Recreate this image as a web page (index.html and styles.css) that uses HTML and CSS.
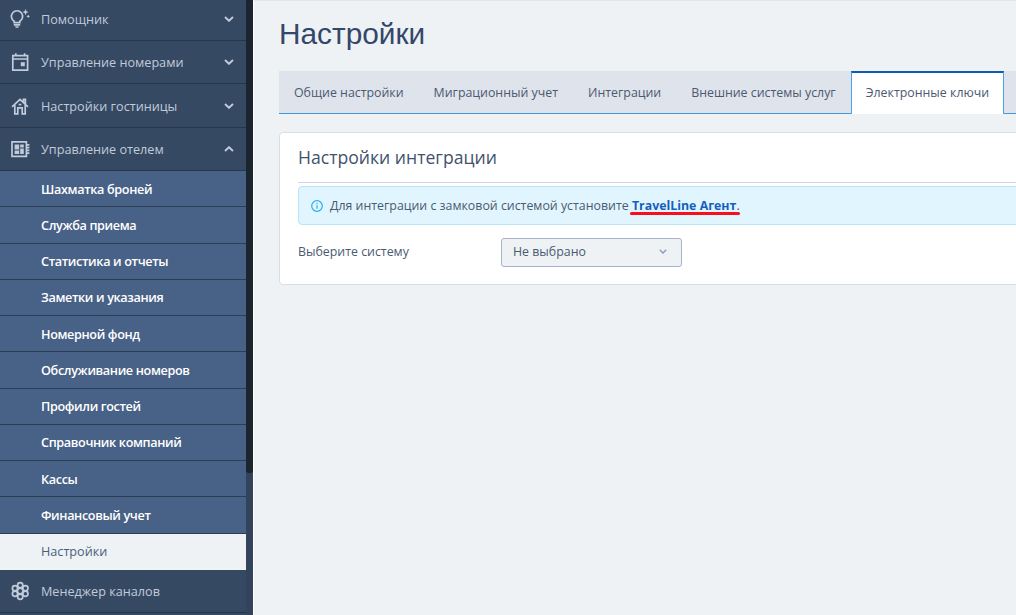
FILE: index.html
```html
<!DOCTYPE html>
<html lang="ru">
<head>
    <meta charset="UTF-8">
    <meta name="viewport" content="width=device-width, initial-scale=1.0">
    <title>Настройки</title>
    <link rel="stylesheet" href="styles.css">
</head>
<body>
    <aside class="sidebar">
        <nav class="menu">
            <a class="menu-item">
                <svg class="menu-icon" viewBox="0 0 20 20">
                    <path d="M4.2 12.2A5.6 5.6 0 1 1 9.8 12.2V13.6H4.2z"/>
                    <path d="M3.8 15.8h6.4M5.4 18h3.2"/>
                    <path class="fill" d="M15.5 0l.9 2.2 2.2.9-2.2.9-.9 2.2-.9-2.2-2.2-.9 2.2-.9zM18.2 5.4l.6 1.3 1.2.6-1.2.6-.6 1.3-.6-1.3-1.2-.6 1.2-.6z"/>
                </svg>
                <span>Помощник</span>
                <svg class="chevron" viewBox="0 0 10 6"><path d="M1 1l4 3.8L9 1"/></svg>
            </a>
            <a class="menu-item">
                <svg class="menu-icon" viewBox="0 0 20 20">
                    <path d="M2.8 3.6h14.8v14.6H2.8zM3 7h14.4M5.8 1.2v3M14.6 1.2v3"/>
                    <path class="fill" d="M10.8 10.2h4v4h-4z"/>
                </svg>
                <span>Управление номерами</span>
                <svg class="chevron" viewBox="0 0 10 6"><path d="M1 1l4 3.8L9 1"/></svg>
            </a>
            <a class="menu-item">
                <svg class="menu-icon" viewBox="0 0 20 20">
                    <path d="M2 10.8L10 3.4l8 7.4M4.8 9v8.8h3v-6h4.4v6h3V9M13.4 6V3.4h2V8"/>
                    <path d="M8.7 8.6h2.6"/>
                </svg>
                <span>Настройки гостиницы</span>
                <svg class="chevron" viewBox="0 0 10 6"><path d="M1 1l4 3.8L9 1"/></svg>
            </a>
            <a class="menu-item">
                <svg class="menu-icon" viewBox="0 0 20 20">
                    <path d="M2 2.8h14.4v14.6H2zM16.5 5.8H19.4M16.5 8.6H19.4M16.5 11.4H19.4M16.5 14.2H19.4"/>
                    <path class="fill" d="M4.6 5.4h4.6v5H4.6zM10.2 5.4h3.6v3h-3.6zM4.6 11.4h4.6V15H4.6zM10.2 9.4h3.6V15h-3.6z"/>
                </svg>
                <span>Управление отелем</span>
                <svg class="chevron" viewBox="0 0 10 6"><path d="M1 5l4-3.8L9 5"/></svg>
            </a>
            <div class="submenu">
                <a class="submenu-item">Шахматка броней</a>
                <a class="submenu-item">Служба приема</a>
                <a class="submenu-item">Статистика и отчеты</a>
                <a class="submenu-item">Заметки и указания</a>
                <a class="submenu-item">Номерной фонд</a>
                <a class="submenu-item">Обслуживание номеров</a>
                <a class="submenu-item">Профили гостей</a>
                <a class="submenu-item">Справочник компаний</a>
                <a class="submenu-item">Кассы</a>
                <a class="submenu-item">Финансовый учет</a>
                <a class="submenu-item active">Настройки</a>
            </div>
            <a class="menu-item">
                <svg class="menu-icon" viewBox="0 0 20 20">
                    <circle cx="10.2" cy="10" r="2.8"/>
                    <circle cx="10.2" cy="4.3" r="2.6"/>
                    <circle cx="10.2" cy="15.7" r="2.6"/>
                    <circle cx="5" cy="7.2" r="2.6"/>
                    <circle cx="15.4" cy="7.2" r="2.6"/>
                    <circle cx="5" cy="12.8" r="2.6"/>
                    <circle cx="15.4" cy="12.8" r="2.6"/>
                </svg>
                <span>Менеджер каналов</span>
            </a>
        </nav>
        <div class="scrollbar"><div class="scrollbar-thumb"></div></div>
    </aside>

    <main class="content">
        <h1>Настройки</h1>

        <div class="tabs">
            <a class="tab">Общие настройки</a>
            <a class="tab">Миграционный учет</a>
            <a class="tab">Интеграции</a>
            <a class="tab">Внешние системы услуг</a>
            <a class="tab active">Электронные ключи</a>
            <span class="tabs-rest"></span>
        </div>

        <section class="panel">
            <h2>Настройки интеграции</h2>
            <div class="notice">
                <svg class="info-icon" viewBox="0 0 12 12">
                    <circle cx="6" cy="6" r="5.3"/>
                    <path d="M6 5.2v3.6M6 3v1.2"/>
                </svg>
                <p>Для интеграции с замковой системой установите <span class="agent"><a>TravelLine Агент</a>.</span></p>
            </div>
            <div class="form-row">
                <label>Выберите систему</label>
                <div class="select">
                    <span>Не выбрано</span>
                    <svg class="select-arrow" viewBox="0 0 8 5"><path d="M.8.8L4 4 7.2.8"/></svg>
                </div>
            </div>
        </section>
    </main>
</body>
</html>
```
FILE: styles.css
```css
* {
    box-sizing: border-box;
}

body {
    margin: 0;
    height: 615px;
    display: flex;
    overflow: hidden;
    background-color: #eef2f5;
    color: #4a5a70;
    font-family: "Open Sans", sans-serif;
    font-size: 12.37px;
}

svg {
    fill: none;
    stroke: currentColor;
}

/* Sidebar */
.sidebar {
    display: flex;
    flex: none;
    width: 254px;
    height: 615px;
    overflow: hidden;
    background-color: #364962;
    border-right: 1px solid #fff;
    font-size: 12.65px;
}

.menu {
    width: 246px;
}

.menu-item {
    display: flex;
    align-items: center;
    height: 43.3px;
    padding: 0 12px 0 10px;
    border-bottom: 1px solid #28374b;
    color: #c0cbdb;
}

.menu-item:first-child {
    height: 41.2px;
    padding-bottom: 2px;
}

.menu-icon {
    width: 20px;
    height: 20px;
    margin-right: 11px;
    stroke-width: 1.7;
}

.fill {
    fill: currentColor;
    stroke: none;
}

.chevron {
    width: 10px;
    height: 6px;
    margin-left: auto;
    stroke-width: 1.9;
}

.submenu-item {
    display: flex;
    align-items: center;
    height: 36.25px;
    padding-left: 41px;
    border-bottom: 1px solid #2c3e56;
    background-color: #486186;
    color: #fff;
    font-weight: 600;
    letter-spacing: -0.36px;
}

.submenu-item.active {
    height: 36px;
    padding-bottom: 1px;
    border-bottom: none;
    background-color: #eef2f5;
    color: #4a5f7d;
    font-weight: 400;
    letter-spacing: 0;
}

.scrollbar {
    width: 7px;
    background-color: #34435c;
}

.scrollbar-thumb {
    height: 473px;
    background-color: #1a2530;
    border-radius: 0 0 3px 3px;
}

/* Content */
.content {
    flex: none;
    width: 800px;
    padding-left: 25px;
    border-top: 1px solid #e2e6ea;
}

h1 {
    height: 70px;
    margin: 0;
    padding-top: 15px;
    color: #34476a;
    font-family: "Liberation Sans", Arial, sans-serif;
    font-size: 29.8px;
    font-weight: 400;
    line-height: 36px;
}

.tabs {
    display: flex;
    height: 43px;
}

.tab {
    flex: none;
    height: 43px;
    padding: 0 15px;
    border-bottom: 1px solid #3f9be0;
    background-color: #dfe3eb;
    line-height: 43px;
}

.tab.active {
    padding: 0 14px;
    border: 1px solid #4ba3e6;
    border-top: 2px solid #0d5cb0;
    border-bottom: none;
    background-color: #fff;
    line-height: 39px;
}

.tabs-rest {
    flex: 1;
    background-color: #dfe3eb;
    border-bottom: 1px solid #3f9be0;
}

.panel {
    height: 153px;
    margin-top: 18px;
    padding: 0 0 0 18px;
    border: 1px solid #d8dee6;
    border-radius: 4px;
    background-color: #fff;
}

h2 {
    height: 50px;
    margin: 0 0 3px;
    border-bottom: 1px solid #d0d6e0;
    color: #42526b;
    font-size: 17.6px;
    font-weight: 400;
    line-height: 49px;
}

.notice {
    display: flex;
    align-items: center;
    height: 39px;
    padding-left: 12px;
    border: 1px solid #b5e6fb;
    border-radius: 4px;
    background-color: #e1f5fe;
}

.notice p {
    margin: 0 0 0 7px;
}

.info-icon {
    width: 12px;
    height: 12px;
    color: #29b0f0;
    stroke-width: 1.2;
}

.agent {
    position: relative;
}

.agent a {
    color: #1560bd;
    font-weight: 700;
}

/* red marker line under the link */
.agent::after {
    content: "";
    position: absolute;
    left: -2px;
    right: 0;
    bottom: -1px;
    height: 3px;
    border-radius: 2px;
    background-color: #fb0d1b;
}

.form-row {
    display: flex;
    margin-top: 13px;
}

.form-row label {
    width: 203px;
    line-height: 28px;
}

.select {
    display: flex;
    align-items: center;
    justify-content: space-between;
    width: 181px;
    height: 29px;
    padding: 0 14px 2px 11px;
    border: 1px solid #a5b3cc;
    border-radius: 3px;
    background-color: #eef2f5;
}

.select-arrow {
    width: 8px;
    height: 5px;
    color: #8c9dbd;
    stroke-width: 1.5;
}
```
